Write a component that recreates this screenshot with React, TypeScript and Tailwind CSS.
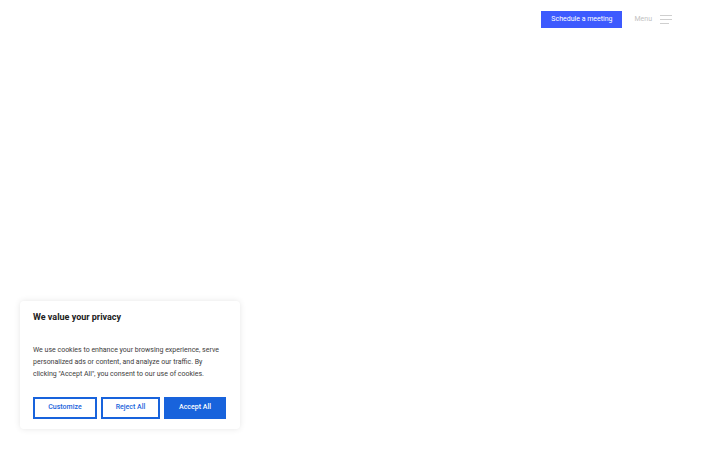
import { useState } from "react";

export default function App() {
  const [open] = useState(true);

  return (
    <div className="relative h-[450px] w-[720px] overflow-hidden bg-white font-['Roboto',sans-serif]">
      {/* Header */}
      <header className="flex items-center justify-end px-12 pt-[11px]">
        <button className="h-[17px] w-[81px] bg-[#3d5afe] text-[7px] text-white">
          Schedule a meeting
        </button>
        <div className="ml-3 flex items-center gap-2 text-[7px] text-[#c2c2c2]">
          <span>Menu</span>
          <svg width="12" height="9" viewBox="0 0 12 9" fill="none" stroke="#cfcfcf" strokeWidth="1">
            <line x1="0" y1="0.5" x2="12" y2="0.5" />
            <line x1="0" y1="4.5" x2="12" y2="4.5" />
            <line x1="0" y1="8.5" x2="9" y2="8.5" />
          </svg>
        </div>
      </header>

      {/* Cookie consent */}
      {open && (
        <div className="absolute left-5 top-[301px] w-[220px] rounded-sm bg-white px-[13px] pb-[10px] pt-[10px] shadow-[0_0_6px_rgba(0,0,0,0.1)]">
          <h2 className="text-[9px] font-bold text-[#212121]">We value your privacy</h2>
          <p className="mt-[19px] text-[7px] leading-[12px] text-[#3c3c3c]">
            We use cookies to enhance your browsing experience, serve personalized ads or content, and
            analyze our traffic. By clicking "Accept All", you consent to our use of cookies.
          </p>
          <div className="mt-[17px] flex gap-1">
            <button className="h-[22px] w-[64px] border-2 border-[#1863dc] text-[7px] font-medium text-[#1863dc]">
              Customize
            </button>
            <button className="h-[22px] w-[59px] border-2 border-[#1863dc] text-[7px] font-medium text-[#1863dc]">
              Reject All
            </button>
            <button className="h-[22px] w-[62px] border-2 border-[#1863dc] bg-[#1863dc] text-[7px] font-medium text-white">
              Accept All
            </button>
          </div>
        </div>
      )}
    </div>
  );
}
